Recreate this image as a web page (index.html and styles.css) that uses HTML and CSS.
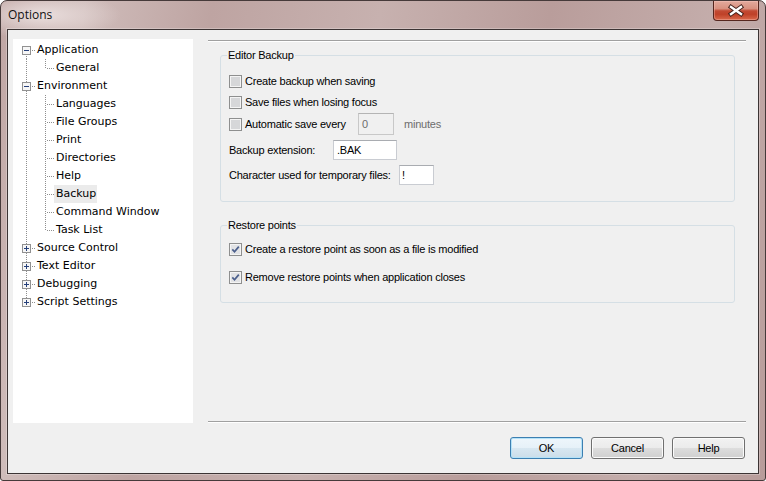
FILE: index.html
```html
<!DOCTYPE html>
<html>
<head>
<meta charset="utf-8">
<title>Options</title>
<link rel="stylesheet" href="styles.css">
</head>
<body>
<div class="window">
  <div class="titlebar">
    <span class="title">Options</span>
    <div class="close">
      <svg width="44" height="18" viewBox="0 0 44 18"><path d="M17 5 L27 12 M27 5 L17 12" stroke="#43201a" stroke-width="4.4" stroke-linecap="square" fill="none"/><path d="M17 5 L27 12 M27 5 L17 12" stroke="#ffffff" stroke-width="2.4" stroke-linecap="square" fill="none"/></svg>
    </div>
  </div>
  <div class="client">
    <div class="tree">
      <div class="node"><div class="g0 first"><svg class="exp" width="9" height="9" viewBox="0 0 9 9"><rect x="0.5" y="0.5" width="8" height="8" fill="#f6f6f6" stroke="#919191"/><path d="M2 4.5h5" stroke="#26407a"/></svg></div><div class="hd"></div><span class="lbl">Application</span></div>
      <div class="node"><div class="g0 full"></div><div class="g1 last"></div><span class="lbl">General</span></div>
      <div class="node"><div class="g0 full"><svg class="exp" width="9" height="9" viewBox="0 0 9 9"><rect x="0.5" y="0.5" width="8" height="8" fill="#f6f6f6" stroke="#919191"/><path d="M2 4.5h5" stroke="#26407a"/></svg></div><div class="hd"></div><span class="lbl">Environment</span></div>
      <div class="node"><div class="g0 full"></div><div class="g1"></div><span class="lbl">Languages</span></div>
      <div class="node"><div class="g0 full"></div><div class="g1"></div><span class="lbl">File Groups</span></div>
      <div class="node"><div class="g0 full"></div><div class="g1"></div><span class="lbl">Print</span></div>
      <div class="node"><div class="g0 full"></div><div class="g1"></div><span class="lbl">Directories</span></div>
      <div class="node"><div class="g0 full"></div><div class="g1"></div><span class="lbl">Help</span></div>
      <div class="node"><div class="g0 full"></div><div class="g1"></div><span class="lbl sel">Backup</span></div>
      <div class="node"><div class="g0 full"></div><div class="g1"></div><span class="lbl">Command Window</span></div>
      <div class="node"><div class="g0 full"></div><div class="g1 last"></div><span class="lbl">Task List</span></div>
      <div class="node"><div class="g0 full"><svg class="exp" width="9" height="9" viewBox="0 0 9 9"><rect x="0.5" y="0.5" width="8" height="8" fill="#f6f6f6" stroke="#919191"/><path d="M2 4.5h5M4.5 2v5" stroke="#26407a"/></svg></div><div class="hd"></div><span class="lbl">Source Control</span></div>
      <div class="node"><div class="g0 full"><svg class="exp" width="9" height="9" viewBox="0 0 9 9"><rect x="0.5" y="0.5" width="8" height="8" fill="#f6f6f6" stroke="#919191"/><path d="M2 4.5h5M4.5 2v5" stroke="#26407a"/></svg></div><div class="hd"></div><span class="lbl">Text Editor</span></div>
      <div class="node"><div class="g0 full"><svg class="exp" width="9" height="9" viewBox="0 0 9 9"><rect x="0.5" y="0.5" width="8" height="8" fill="#f6f6f6" stroke="#919191"/><path d="M2 4.5h5M4.5 2v5" stroke="#26407a"/></svg></div><div class="hd"></div><span class="lbl">Debugging</span></div>
      <div class="node"><div class="g0 lastroot"><svg class="exp" width="9" height="9" viewBox="0 0 9 9"><rect x="0.5" y="0.5" width="8" height="8" fill="#f6f6f6" stroke="#919191"/><path d="M2 4.5h5M4.5 2v5" stroke="#26407a"/></svg></div><div class="hd"></div><span class="lbl">Script Settings</span></div>
    </div>
    <div class="main">
      <div class="sep top"></div>
      <fieldset class="group g-backup">
        <legend>Editor Backup</legend>
        <div class="gbody backup-body">
          <div class="row h22"><svg class="cb" width="13" height="13" viewBox="0 0 13 13"><rect x="0.5" y="0.5" width="12" height="12" fill="#f4f4f4" stroke="#8e8f8f"/><rect x="2" y="2" width="9" height="9" fill="#d6d7d9"/></svg><span>Create backup when saving</span></div>
          <div class="row h20"><svg class="cb" width="13" height="13" viewBox="0 0 13 13"><rect x="0.5" y="0.5" width="12" height="12" fill="#f4f4f4" stroke="#8e8f8f"/><rect x="2" y="2" width="9" height="9" fill="#d6d7d9"/></svg><span>Save files when losing focus</span></div>
          <div class="row h24"><svg class="cb" width="13" height="13" viewBox="0 0 13 13"><rect x="0.5" y="0.5" width="12" height="12" fill="#f4f4f4" stroke="#8e8f8f"/><rect x="2" y="2" width="9" height="9" fill="#d6d7d9"/></svg><span class="autolbl">Automatic save every</span><div class="tb dis num">0</div><span class="unit">minutes</span></div>
          <div class="row h20 mt4"><span class="lab-ext">Backup extension:</span><div class="tb ext">.BAK</div></div>
          <div class="row h20 mt5"><span class="lab-chr">Character used for temporary files:</span><div class="tb chr">!</div></div>
        </div>
      </fieldset>
      <fieldset class="group g-restore">
        <legend>Restore points</legend>
        <div class="gbody restore-body">
          <div class="row h22"><svg class="cb" width="13" height="13" viewBox="0 0 13 13"><rect x="0.5" y="0.5" width="12" height="12" fill="#f4f4f4" stroke="#8e8f8f"/><rect x="2" y="2" width="9" height="9" fill="#e2e3e5"/><path d="M3.3 6.4 L5.5 8.8 L9.8 3.6" stroke="#4b5f8c" stroke-width="1.7" fill="none"/></svg><span>Create a restore point as soon as a file is modified</span></div>
          <div class="row h22 mt6"><svg class="cb" width="13" height="13" viewBox="0 0 13 13"><rect x="0.5" y="0.5" width="12" height="12" fill="#f4f4f4" stroke="#8e8f8f"/><rect x="2" y="2" width="9" height="9" fill="#e2e3e5"/><path d="M3.3 6.4 L5.5 8.8 L9.8 3.6" stroke="#4b5f8c" stroke-width="1.7" fill="none"/></svg><span>Remove restore points when application closes</span></div>
        </div>
      </fieldset>
      <div class="sep bottom"></div>
      <div class="buttons">
        <div class="btn default">OK</div>
        <div class="btn">Cancel</div>
        <div class="btn">Help</div>
      </div>
    </div>
  </div>
</div>
</body>
</html>
```
FILE: styles.css
```css
html, body {
  margin: 0;
  padding: 0;
  background: #ffffff;
}
body {
  width: 766px;
  height: 481px;
  overflow: hidden;
}
.window {
  width: 766px;
  height: 481px;
  box-sizing: border-box;
  border: 1px solid #463a3a;
  border-radius: 7px 7px 3px 3px;
  padding: 0 6px 6px 6px;
  display: flex;
  flex-direction: column;
  background:
    radial-gradient(ellipse 80px 24px at 40px 14px, rgba(238,228,227,0.9), rgba(238,228,227,0) 100%),
    linear-gradient(100deg, #bfa5a3 0%, #cfbcba 10%, #bea4a2 25%, #c7b1af 45%, #b99d9b 65%, #c4adab 85%, #b89c9a 100%);
}
.titlebar {
  height: 28px;
  display: flex;
  align-items: flex-start;
  flex: none;
}
.title {
  font-family: "Open Sans", "Noto Sans", sans-serif;
  font-size: 12px;
  line-height: 16px;
  margin-top: 6px;
  padding-left: 1px;
  color: #111;
}
.close {
  margin-left: auto;
  width: 46px;
  height: 20px;
  box-sizing: border-box;
  border: 1px solid #56261e;
  border-top: none;
  border-radius: 0 0 4px 4px;
  background: linear-gradient(to bottom, #e3aa9d 0%, #d8907f 40%, #c24a33 52%, #bf4128 70%, #d9694c 100%);
  box-shadow: inset 0 0 0 1px rgba(255,210,200,0.35);
  display: flex;
  align-items: center;
  justify-content: center;
}
.close svg { display: block; }
.client {
  flex: 1;
  display: flex;
  background: #f0f0f0;
  border: 1px solid #3c3434;
  box-shadow: 0 0 0 1px rgba(255,255,255,0.25);
}
/* tree */
.tree {
  margin: 9px 0 0 5px;
  width: 180px;
  height: 384px;
  box-sizing: border-box;
  padding-top: 2px;
  background: #ffffff;
  flex: none;
  font-family: "DejaVu Sans", sans-serif;
  font-size: 11px;
  color: #000;
}
.node {
  height: 18px;
  display: flex;
  align-items: flex-start;
}
.g0 {
  width: 18px;
  height: 18px;
  flex: none;
  background-repeat: no-repeat;
  background-image: repeating-linear-gradient(to bottom, #8f8f8f 0 1px, transparent 1px 2px);
}
.g0.full { background-size: 1px 18px; background-position: 13px 0; }
.g0.first { background-size: 1px 9px; background-position: 13px 9px; }
.g0.lastroot { background-size: 1px 9px; background-position: 13px 0; }
.exp {
  display: block;
  margin: 5px 0 0 9px;
}
.hd {
  width: 4px;
  height: 18px;
  flex: none;
  background-repeat: no-repeat;
  background-image: repeating-linear-gradient(to right, transparent 0 1px, #8f8f8f 1px 2px);
  background-size: 4px 1px;
  background-position: 0 9px;
}
.g1 {
  width: 23px;
  height: 18px;
  flex: none;
  background-repeat: no-repeat;
  background-image:
    repeating-linear-gradient(to bottom, #8f8f8f 0 1px, transparent 1px 2px),
    repeating-linear-gradient(to right, transparent 0 1px, #8f8f8f 1px 2px);
  background-size: 1px 18px, 8px 1px;
  background-position: 14px 0, 15px 9px;
}
.g1.last { background-size: 1px 10px, 8px 1px; }
.lbl {
  line-height: 18px;
  height: 18px;
  padding: 0 1px 0 2px;
  white-space: nowrap;
}
.lbl.sel { background: #ebebeb; }
/* main */
.main {
  margin-left: 15px;
  width: 538px;
  flex: none;
  display: flex;
  flex-direction: column;
  padding-bottom: 14px;
  box-sizing: border-box;
  font-family: "Liberation Sans", Arial, sans-serif;
  font-size: 11px;
  letter-spacing: -0.22px;
  color: #000;
}
.sep {
  height: 0;
  border-top: 1px solid #a0a0a0;
  border-bottom: 1px solid #ffffff;
  flex: none;
}
.sep.top { margin-top: 10px; }
.sep.bottom { margin-top: auto; }
.group {
  margin: 0 11px 0 12px;
  padding: 0;
  min-width: 0;
  border: 1px solid #d5dfe5;
  border-radius: 3px;
  flex: none;
}
.g-backup { margin-top: 7px; }
.g-restore { margin-top: 17px; }
.group legend {
  font-size: 11px;
  line-height: 13px;
  padding: 0 1px;
  margin-left: 6px;
}
.backup-body { padding: 8px 0 16px 8px; }
.restore-body { padding: 6px 0 14px 8px; }
.row {
  display: flex;
  align-items: center;
  white-space: nowrap;
}
.h20 { height: 20px; }
.h22 { height: 22px; }
.h24 { height: 24px; }
.mt4 { margin-top: 4px; }
.mt5 { margin-top: 5px; }
.mt6 { margin-top: 6px; }
.cb {
  display: block;
  flex: none;
  margin-right: 3px;
}
.autolbl { width: 113px; }
.unit {
  margin-left: 10px;
  color: #6d6d6d;
}
.tb {
  box-sizing: border-box;
  height: 20px;
  background: #ffffff;
  border: 1px solid #c9ccd2;
  border-top-color: #a9acb1;
  padding-left: 3px;
  display: flex;
  align-items: center;
}
.tb.dis {
  background: #f0f0f0;
  color: #6d6d6d;
  border-color: #c8c8c8;
  border-top-color: #b4b4b4;
}
.num { width: 36px; height: 22px; }
.lab-ext { width: 104px; }
.ext { width: 64px; }
.lab-chr { width: 170px; }
.chr { width: 35px; padding-left: 2px; }
.buttons {
  margin-top: 14px;
  display: flex;
  justify-content: flex-end;
  gap: 8px;
  padding-right: 1px;
  flex: none;
}
.btn {
  width: 73px;
  height: 22px;
  box-sizing: border-box;
  border: 1px solid #707070;
  border-radius: 3px;
  background: linear-gradient(to bottom, #f2f2f2 0%, #ebebeb 50%, #dddddd 51%, #cfcfcf 100%);
  box-shadow: inset 0 0 0 1px #fbfbfb;
  display: flex;
  align-items: center;
  justify-content: center;
  color: #000;
}
.btn.default {
  border-color: #3c7fb1;
  box-shadow: inset 0 0 0 1px #b4e2f8;
  background: linear-gradient(to bottom, #eef6fb 0%, #e6f1f8 50%, #d8e7f1 51%, #cbdde9 100%);
}
```
